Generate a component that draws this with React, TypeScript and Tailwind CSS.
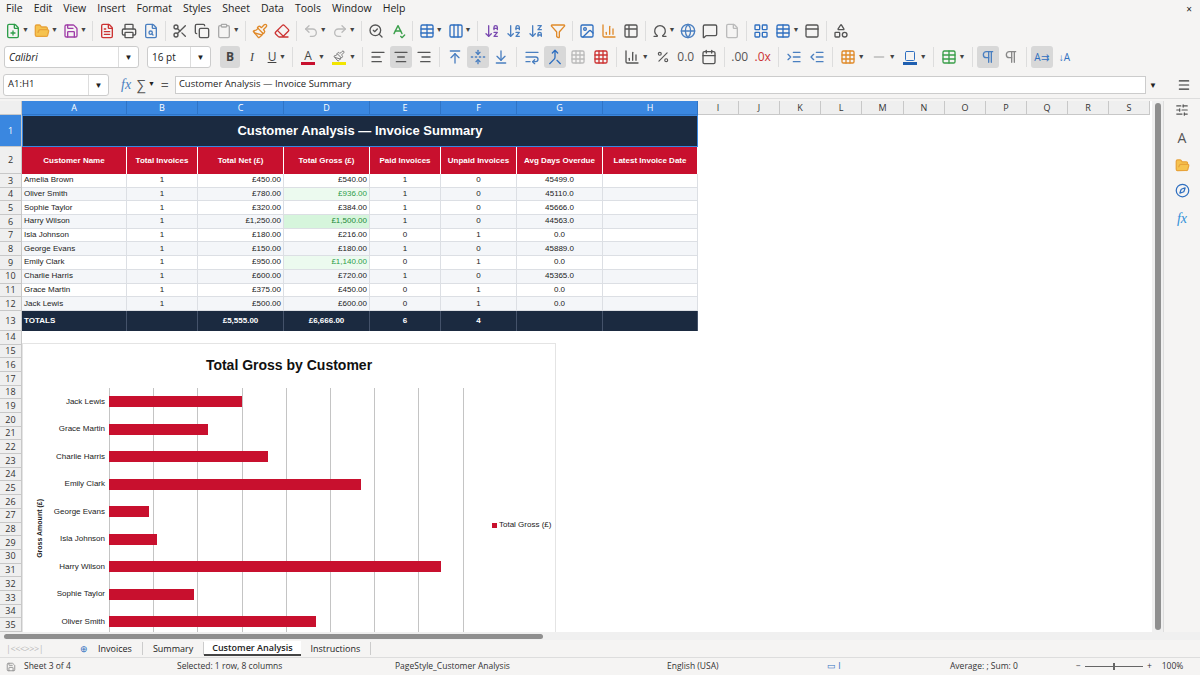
import React from "react";
import {
  FilePlus, FolderOpen, Save, FileText, Printer, FileSearch, Scissors, Copy, Clipboard, Paintbrush, Eraser,
  Undo2, Redo2, SearchCheck, SpellCheck, Table, Columns3, ArrowDownAZ, ArrowDownZA, Filter, Image, BarChart3,
  Table2, Omega, Globe, MessageSquare, File, LayoutGrid, PanelTop, Shapes,
  AlignLeft, AlignCenter, AlignRight, ArrowUpToLine, FoldVertical, ArrowDownToLine, WrapText, Merge, Grid3x3,
  Percent, Calendar, IndentIncrease, IndentDecrease, Square, Minus, Pilcrow, Menu, SlidersHorizontal, Compass
} from "lucide-react";

const UI = { fontFamily: '"Open Sans","Noto Sans",sans-serif' };
const CELL = { fontFamily: '"Liberation Sans","Arial",sans-serif' };

const cols = [
  ["A", 105], ["B", 71], ["C", 86], ["D", 86], ["E", 71], ["F", 76], ["G", 86], ["H", 95],
  ["I", 41], ["J", 41], ["K", 41], ["L", 41], ["M", 42], ["N", 41], ["O", 41], ["P", 41], ["Q", 41], ["R", 41], ["S", 41],
] as const;

const data = [
  ["Amelia Brown", "£450.00", "£540.00", "1", "0", "45499.0", 0],
  ["Oliver Smith", "£780.00", "£936.00", "1", "0", "45110.0", 1],
  ["Sophie Taylor", "£320.00", "£384.00", "1", "0", "45666.0", 0],
  ["Harry Wilson", "£1,250.00", "£1,500.00", "1", "0", "44563.0", 2],
  ["Isla Johnson", "£180.00", "£216.00", "0", "1", "0.0", 0],
  ["George Evans", "£150.00", "£180.00", "1", "0", "45889.0", 0],
  ["Emily Clark", "£950.00", "£1,140.00", "0", "1", "0.0", 1],
  ["Charlie Harris", "£600.00", "£720.00", "1", "0", "45365.0", 0],
  ["Grace Martin", "£375.00", "£450.00", "0", "1", "0.0", 0],
  ["Jack Lewis", "£500.00", "£600.00", "0", "1", "0.0", 0],
] as const;

const W = (i: number) => cols[i][1];

function Ico({ children }: { children: React.ReactNode }) {
  return <div className="w-[22px] h-[22px] flex items-center justify-center text-[#555]">{children}</div>;
}
const Dd = () => <span className="text-[7px] text-[#444] -ml-[2px] mr-[2px]">▼</span>;
const Sep = () => <div className="w-px h-[20px] bg-[#ddd] mx-[3px]" />;

function RowHead({ n, h, sel }: { n: number; h: string; sel?: boolean }) {
  return (
    <div className={`w-[22px] shrink-0 ${h} flex items-center justify-center text-[9px] border-b border-r border-[#c8c8c8] ${sel ? "bg-[#3a87e0] text-white" : "bg-[#efefef] text-[#333]"}`} style={UI}>
      {n}
    </div>
  );
}

const chartData = [
  ["Jack Lewis", 600], ["Grace Martin", 450], ["Charlie Harris", 720], ["Emily Clark", 1140],
  ["George Evans", 180], ["Isla Johnson", 216], ["Harry Wilson", 1500], ["Sophie Taylor", 384], ["Oliver Smith", 936],
] as const;

export default function App() {
  const s = 16;
  return (
    <div className="w-[1200px] h-[675px] bg-[#f5f4f3] flex flex-col overflow-hidden text-[#222]" style={UI}>
      {/* menu */}
      <div className="h-[18px] flex items-center text-[10.5px] gap-[11px] pl-[6px] relative">
        {["File", "Edit", "View", "Insert", "Format", "Styles", "Sheet", "Data", "Tools", "Window", "Help"].map(m => <span key={m}>{m}</span>)}
        <span className="absolute right-[8px] top-[2px] text-[10px]">×</span>
      </div>
      {/* toolbar 1 */}
      <div className="h-[25px] flex items-center pl-[2px]">
        <Ico><FilePlus size={s} color="#2e9e4a" /></Ico><Dd />
        <Ico><FolderOpen size={s} color="#e8a33a" fill="#f6c34f" /></Ico><Dd />
        <Ico><Save size={s} color="#a03ea8" /></Ico><Dd /><Sep />
        <Ico><FileText size={s} color="#c33" /></Ico><Ico><Printer size={s} /></Ico><Ico><FileSearch size={s} color="#4a7fc0" /></Ico><Sep />
        <Ico><Scissors size={s} /></Ico><Ico><Copy size={s} /></Ico><Ico><Clipboard size={s} color="#aaa" /></Ico><Dd /><Sep />
        <Ico><Paintbrush size={s} color="#e08a2a" /></Ico><Ico><Eraser size={s} color="#c33" /></Ico><Sep />
        <Ico><Undo2 size={s} color="#bbb" /></Ico><Dd /><Ico><Redo2 size={s} color="#bbb" /></Ico><Dd /><Sep />
        <Ico><SearchCheck size={s} /></Ico><Ico><SpellCheck size={s} color="#3a9e4a" /></Ico><Sep />
        <Ico><Table size={s} color="#2f6fc0" /></Ico><Dd /><Ico><Columns3 size={s} color="#2f6fc0" /></Ico><Dd /><Sep />
        <Ico><ArrowDownAZ size={s} color="#7a4ab0" /></Ico><Ico><ArrowDownAZ size={s} color="#4a7fc0" /></Ico><Ico><ArrowDownZA size={s} color="#4a7fc0" /></Ico><Ico><Filter size={s} color="#e08a2a" /></Ico><Sep />
        <Ico><Image size={s} color="#2f6fc0" /></Ico><Ico><BarChart3 size={s} color="#e08a2a" /></Ico><Ico><Table2 size={s} /></Ico><Sep />
        <Ico><Omega size={s} /></Ico><Dd /><Ico><Globe size={s} color="#4a7fc0" /></Ico><Ico><MessageSquare size={s} /></Ico><Ico><File size={s} color="#bbb" /></Ico><Sep />
        <Ico><LayoutGrid size={s} color="#2f6fc0" /></Ico><Ico><Table size={s} color="#2f6fc0" /></Ico><Dd /><Ico><PanelTop size={s} /></Ico><Sep />
        <Ico><Shapes size={s} /></Ico>
      </div>
      {/* toolbar 2 */}
      <div className="h-[28px] flex items-center pl-[4px] gap-[1px]">
        <div className="w-[135px] h-[22px] bg-white border border-[#ccc] rounded-[3px] flex items-center justify-between text-[10px] italic pl-[4px]">
          Calibri<span className="w-[20px] border-l border-[#ddd] h-full flex items-center justify-center not-italic text-[8px]">▼</span>
        </div>
        <div className="w-[64px] h-[22px] ml-[7px] bg-white border border-[#ccc] rounded-[3px] flex items-center justify-between text-[10px] pl-[4px]">
          16 pt<span className="w-[20px] border-l border-[#ddd] h-full flex items-center justify-center text-[8px]">▼</span>
        </div>
        <div className="w-[20px] h-[22px] ml-[8px] bg-[#d8d8d8] rounded-[3px] flex items-center justify-center text-[12px] font-bold text-[#444]">B</div>
        <div className="w-[22px] text-center text-[12px] italic text-[#444]" style={{ fontFamily: "Liberation Serif, serif" }}>I</div>
        <div className="w-[16px] text-center text-[12px] underline text-[#444]">U</div><Dd /><Sep />
        <div className="w-[22px] flex flex-col items-center"><span className="text-[12px] leading-[13px] text-[#444]">A</span><span className="w-[14px] h-[3px] bg-[#c8102e]" /></div><Dd />
        <div className="w-[22px] flex flex-col items-center"><Paintbrush size={12} color="#777" /><span className="w-[14px] h-[3px] bg-[#f2e500]" /></div><Dd /><Sep />
        <Ico><AlignLeft size={s} /></Ico><div className="bg-[#d8d8d8] rounded-[3px]"><Ico><AlignCenter size={s} /></Ico></div><Ico><AlignRight size={s} /></Ico><Sep />
        <Ico><ArrowUpToLine size={s} color="#4a7fc0" /></Ico><div className="bg-[#d8d8d8] rounded-[3px]"><Ico><FoldVertical size={s} color="#4a7fc0" /></Ico></div><Ico><ArrowDownToLine size={s} color="#4a7fc0" /></Ico><Sep />
        <Ico><WrapText size={s} color="#4a7fc0" /></Ico><div className="bg-[#d8d8d8] rounded-[3px]"><Ico><Merge size={s} color="#2f6fc0" /></Ico></div><Ico><Grid3x3 size={s} color="#bbb" /></Ico><Ico><Grid3x3 size={s} color="#c33" /></Ico><Sep />
        <Ico><BarChart3 size={s} /></Ico><Dd /><Ico><Percent size={14} /></Ico>
        <span className="w-[22px] text-center text-[12px] text-[#555]">0.0</span><Ico><Calendar size={s} /></Ico><Sep />
        <span className="w-[22px] text-center text-[12px] text-[#555]">.00</span><span className="w-[22px] text-center text-[12px] text-[#c33]">.0x</span><Sep />
        <Ico><IndentIncrease size={s} color="#4a7fc0" /></Ico><Ico><IndentDecrease size={s} color="#4a7fc0" /></Ico><Sep />
        <Ico><Grid3x3 size={s} color="#e08a2a" /></Ico><Dd /><Ico><Minus size={s} color="#bbb" /></Ico><Dd />
        <div className="w-[22px] flex flex-col items-center"><Square size={12} color="#2f6fc0" /><span className="w-[14px] h-[3px] bg-[#1f5fb0]" /></div><Dd /><Sep />
        <Ico><Table size={s} color="#3a9e4a" /></Ico><Dd /><Sep />
        <div className="bg-[#d8d8d8] rounded-[3px]"><Ico><Pilcrow size={s} color="#4a7fc0" /></Ico></div><Ico><Pilcrow size={s} color="#888" /></Ico><Sep />
        <div className="bg-[#d8d8d8] rounded-[3px]"><Ico><span className="text-[10px] text-[#2f6fc0]">A⇉</span></Ico></div><Ico><span className="text-[10px] text-[#2f6fc0]">↓A</span></Ico>
      </div>
      {/* formula bar */}
      <div className="h-[28px] flex items-center pl-[3px] border-b border-[#ddd]">
        <div className="w-[106px] h-[22px] bg-white border border-[#ccc] rounded-[3px] flex items-center justify-between text-[9.5px] pl-[4px]">
          A1:H1<span className="w-[20px] border-l border-[#ddd] h-full flex items-center justify-center text-[8px]">▼</span>
        </div>
        <span className="ml-[12px] text-[14px] italic text-[#4a7fc0]" style={{ fontFamily: "Liberation Serif, serif" }}>fx</span>
        <span className="ml-[6px] text-[14px] text-[#555]">∑</span><span className="text-[7px] ml-[2px]">▼</span>
        <span className="ml-[6px] text-[14px] text-[#555]">=</span>
        <div className="ml-[6px] w-[971px] h-[18px] bg-white border border-[#ccc] flex items-center pl-[3px] text-[9.5px]">Customer Analysis — Invoice Summary</div>
        <span className="ml-[3px] text-[8px]">▼</span>
        <Menu size={14} className="ml-[20px]" color="#333" />
      </div>
      {/* main */}
      <div className="flex-1 flex min-h-0 pt-[2px]">
        <div className="w-[1152px] flex flex-col relative overflow-hidden bg-white">
          {/* col headers */}
          <div className="flex h-[14px] shrink-0">
            <div className="w-[22px] bg-[#efefef] border-r border-b border-[#c8c8c8]" />
            {cols.map(([c, w], i) => (
              <div key={c} style={{ width: w }} className={`shrink-0 flex items-center justify-center text-[9px] border-r border-b ${i < 8 ? "bg-[#3a87e0] text-white border-[#2f74c6]" : "bg-[#efefef] text-[#333] border-[#c8c8c8]"}`}>{c}</div>
            ))}
          </div>
          <div style={CELL} className="flex flex-col">
            {/* row 1 */}
            <div className="flex h-[32px]">
              <RowHead n={1} h="h-[32px]" sel />
              <div style={{ width: 676 }} className="bg-[#1b2a40] text-white font-bold text-[13px] flex items-center justify-center border border-[#3a87e0]">Customer Analysis — Invoice Summary</div>
            </div>
            {/* row 2 */}
            <div className="flex h-[27px]">
              <RowHead n={2} h="h-[27px]" />
              {["Customer Name", "Total Invoices", "Total Net (£)", "Total Gross (£)", "Paid Invoices", "Unpaid Invoices", "Avg Days Overdue", "Latest Invoice Date"].map((t, i) => (
                <div key={t} style={{ width: W(i) }} className="bg-[#c8102e] text-white font-bold text-[8px] flex items-center justify-center border-r border-white whitespace-nowrap">{t}</div>
              ))}
            </div>
            {data.map((r, ri) => {
              const bg = ri % 2 ? "bg-[#f4f6f9]" : "bg-white";
              const c = "h-full flex items-center text-[8px] border-r border-b border-[#dcdfe4] px-[2px]";
              return (
                <div key={ri} className="flex h-[13.7px]">
                  <RowHead n={ri + 3} h="h-[13.7px]" />
                  <div style={{ width: W(0) }} className={`${c} ${bg}`}>{r[0]}</div>
                  <div style={{ width: W(1) }} className={`${c} ${bg} justify-center`}>1</div>
                  <div style={{ width: W(2) }} className={`${c} ${bg} justify-end`}>{r[1]}</div>
                  <div style={{ width: W(3) }} className={`${c} justify-end ${r[6] === 2 ? "bg-[#d6f5dc] text-[#1e8a3a]" : r[6] === 1 ? "bg-[#ecfaef] text-[#2e9e4a]" : bg}`}>{r[2]}</div>
                  <div style={{ width: W(4) }} className={`${c} ${bg} justify-center`}>{r[3]}</div>
                  <div style={{ width: W(5) }} className={`${c} ${bg} justify-center`}>{r[4]}</div>
                  <div style={{ width: W(6) }} className={`${c} ${bg} justify-center`}>{r[5]}</div>
                  <div style={{ width: W(7) }} className={`${c} ${bg}`} />
                </div>
              );
            })}
            <div className="flex h-[20px]">
              <RowHead n={13} h="h-[20px]" />
              {["TOTALS", "", "£5,555.00", "£6,666.00", "6", "4", "", ""].map((t, i) => (
                <div key={i} style={{ width: W(i) }} className={`bg-[#1b2a40] text-white text-[8px] font-bold flex items-center border-r border-[#44526a] px-[2px] ${i === 0 ? "" : "justify-center"}`}>{t}</div>
              ))}
            </div>
            {Array.from({ length: 22 }, (_, i) => (
              <div key={i} className="flex h-[13.7px]">
                <RowHead n={i + 14} h="h-[13.7px]" />
              </div>
            ))}
          </div>
          {/* chart */}
          <div className="absolute left-[22px] top-[242px] w-[534px] h-[300px] bg-white border border-[#e4e4e4]" style={CELL}>
            <div className="text-center font-bold text-[14px] mt-[11px] text-[#111]">Total Gross by Customer</div>
            <div className="absolute left-[12px] top-[155px] text-[7px] font-bold whitespace-nowrap [writing-mode:vertical-rl] rotate-180">Gross Amount (£)</div>
            <div className="absolute left-[86px] top-[44px] w-[400px] h-[260px]">
              {[0, 1, 2, 3, 4, 5, 6, 7, 8].map(g => (
                <div key={g} className="absolute top-0 bottom-0 w-px bg-[#c4c4c4]" style={{ left: g * 44.2 }} />
              ))}
              {chartData.map(([n, v], i) => (
                <div key={n} className="absolute left-0 flex items-center" style={{ top: 8 + i * 27.5 }}>
                  <span className="absolute right-full mr-[4px] text-[8px] whitespace-nowrap text-[#222]">{n}</span>
                  <div className="h-[11px] bg-[#c8102e]" style={{ width: v * 0.221 }} />
                </div>
              ))}
            </div>
            <div className="absolute left-[469px] top-[175px] flex items-center gap-[2px] text-[8px] whitespace-nowrap">
              <span className="w-[5px] h-[5px] bg-[#c8102e]" />Total Gross (£)
            </div>
          </div>
        </div>
        {/* vertical scroll */}
        <div className="w-[11px] bg-[#f0f0f0] flex justify-center pt-[2px]">
          <div className="w-[6px] h-[527px] bg-[#8f8f8f] rounded-[3px]" />
        </div>
        {/* sidebar */}
        <div className="flex-1 flex flex-col items-center gap-[10px] pt-[2px] border-l border-[#ddd]">
          <SlidersHorizontal size={14} color="#555" />
          <span className="text-[14px] text-[#555]">A</span>
          <FolderOpen size={15} color="#e8a33a" fill="#f6c34f" />
          <Compass size={15} color="#2f6fc0" />
          <span className="text-[14px] italic text-[#2f8fd8]" style={{ fontFamily: "Liberation Serif, serif" }}>fx</span>
        </div>
      </div>
      {/* hscroll */}
      <div className="h-[8px] flex items-center bg-[#f0f0f0]">
        <div className="ml-[4px] w-[539px] h-[5px] bg-[#8f8f8f] rounded-[3px]" />
      </div>
      {/* tabs */}
      <div className="h-[18px] flex items-center text-[9px] border-b border-[#ddd]">
        <span className="w-[70px] text-[#bbb] pl-[6px] tracking-tighter">|&lt;&lt;&lt;&gt;&gt;&gt;|</span>
        <span className="text-[#2f6fc0] ml-[10px]">⊕</span>
        <span className="px-[10px] border-r border-[#ccc]">Invoices</span>
        <span className="px-[10px] border-r border-[#ccc]">Summary</span>
        <span className="px-[8px] font-semibold border-b-2 border-[#444] bg-white">Customer Analysis</span>
        <span className="px-[10px] border-r border-[#ccc]">Instructions</span>
      </div>
      {/* status */}
      <div className="h-[17px] flex items-center text-[8.5px] text-[#333]">
        <Save size={10} color="#888" className="ml-[6px]" />
        <span className="ml-[8px] w-[153px]">Sheet 3 of 4</span>
        <span className="w-[218px]">Selected: 1 row, 8 columns</span>
        <span className="w-[272px]">PageStyle_Customer Analysis</span>
        <span className="w-[160px]">English (USA)</span>
        <span className="w-[123px] text-[#2f6fc0]">▭ I</span>
        <span className="w-[126px]">Average: ; Sum: 0</span>
        <span>−</span><div className="w-[58px] h-px bg-[#666] mx-[4px] relative"><span className="absolute left-[28px] -top-[3px] w-[2px] h-[7px] bg-[#666]" /></div><span>+</span>
        <span className="ml-[10px]">100%</span>
      </div>
    </div>
  );
}
